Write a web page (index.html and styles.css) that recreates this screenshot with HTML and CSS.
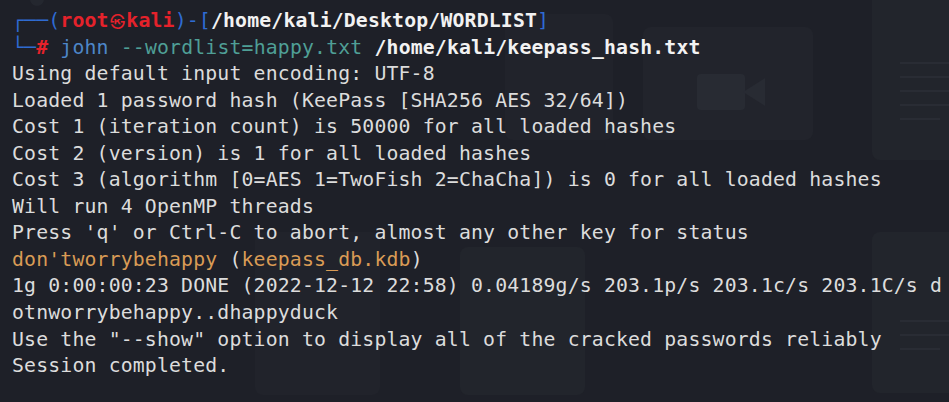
FILE: index.html
```html
<!DOCTYPE html>
<html lang="en">
<head>
<meta charset="utf-8">
<title>john - keepass</title>
<link rel="stylesheet" href="styles.css">
</head>
<body>
<div class="screen">
  <div class="desktop" aria-hidden="true">
    <div class="dot"></div>
    <div class="tile tile-file"></div>
    <div class="tile tile-video">
      <svg class="cam" width="70" height="40" viewBox="0 0 70 40"><rect x="0" y="2" width="48" height="36" rx="4" fill="#282b33"/><polygon points="46,20 68,6 68,34" fill="#282b33"/></svg>
    </div>
    <div class="tile tile-doc1">
      <div class="ln"></div><div class="ln"></div><div class="ln"></div><div class="ln"></div><div class="ln short"></div>
    </div>
    <div class="tile tile-a"></div>
    <div class="tile tile-bin"></div>
    <div class="tile tile-doc2">
      <div class="ln"></div><div class="ln"></div><div class="ln short"></div>
    </div>
  </div>
  <div class="term">
    <div class="line"><span class="blue">┌──(</span><span class="red b">root<span class="sym">㉿</span>kali</span><span class="blue">)-[</span><span class="white b">/home/kali/Desktop/WORDLIST</span><span class="blue">]</span></div>
    <div class="line"><span class="blue">└─</span><span class="red b">#</span> <span class="cmd">john</span> <span class="arg">--wordlist=happy.txt</span> <span class="white b">/home/kali/keepass_hash.txt</span></div>
    <div class="line">Using default input encoding: UTF-8</div>
    <div class="line">Loaded 1 password hash (KeePass [SHA256 AES 32/64])</div>
    <div class="line">Cost 1 (iteration count) is 50000 for all loaded hashes</div>
    <div class="line">Cost 2 (version) is 1 for all loaded hashes</div>
    <div class="line">Cost 3 (algorithm [0=AES 1=TwoFish 2=ChaCha]) is 0 for all loaded hashes</div>
    <div class="line">Will run 4 OpenMP threads</div>
    <div class="line">Press 'q' or Ctrl-C to abort, almost any other key for status</div>
    <div class="line"><span class="orange">don'tworrybehappy</span> (<span class="orange">keepass_db.kdb</span>)</div>
    <div class="line">1g 0:00:00:23 DONE (2022-12-12 22:58) 0.04189g/s 203.1p/s 203.1c/s 203.1C/s d</div>
    <div class="line">otnworrybehappy..dhappyduck</div>
    <div class="line">Use the "--show" option to display all of the cracked passwords reliably</div>
    <div class="line">Session completed.</div>
  </div>
</div>
</body>
</html>
```
FILE: styles.css
```css
html, body {
  margin: 0;
  padding: 0;
  background: #1e2028;
}
.screen {
  position: relative;
  width: 949px;
  height: 402px;
  overflow: hidden;
  background: #1e2028;
}
.desktop {
  position: absolute;
  inset: 0;
}
.dot {
  position: absolute;
  left: 30px;
  top: -8px;
  width: 14px;
  height: 14px;
  border-radius: 50%;
  background: #24272f;
}
.tile {
  position: absolute;
  background: #22252c;
  border-radius: 8px;
}
.tile-file { left: 505px; top: 14px; width: 108px; height: 126px; background: #21232b; }
.tile-video { left: 643px; top: 27px; width: 170px; height: 113px; background: #22242c; }
.cam { position: absolute; left: 54px; top: 45px; }
.tile-doc1 { left: 872px; top: -10px; width: 100px; height: 170px; padding: 72px 0 0 28px; box-sizing: border-box; }
.tile-doc2 { left: 872px; top: 232px; width: 100px; height: 161px; padding: 88px 0 0 28px; box-sizing: border-box; }
.ln { height: 2px; background: #292c34; margin-bottom: 12px; }
.ln.short { width: 40px; }
.tile-a { left: 255px; top: 232px; width: 125px; height: 163px; background: #21232b; }
.tile-bin { left: 460px; top: 247px; width: 125px; height: 148px; background: #22252c; }

.term {
  position: relative;
  padding: 8px 0 0 12px;
  font-family: "DejaVu Sans Mono", "Liberation Mono", monospace;
  font-size: 19.8px;
  letter-spacing: 0.17px;
  line-height: 26.55px;
  color: #dcdcdc;
}
.line { white-space: pre; height: 26.55px; }
.b { font-weight: bold; }
.blue { color: #2f6bd2; }
.red { color: #e5222b; }
.white { color: #f2f2f2; }
.cmd { color: #4d86c8; }
.arg { color: #4f9f96; }
.orange { color: #d99b55; }
.sym {
  display: inline-block;
  width: 2ch;
  text-align: center;
  font-family: "Noto Sans CJK KR", "DejaVu Sans", sans-serif;
  font-size: 15px;
  font-weight: bold;
  vertical-align: top;
  letter-spacing: 0;
}
```
